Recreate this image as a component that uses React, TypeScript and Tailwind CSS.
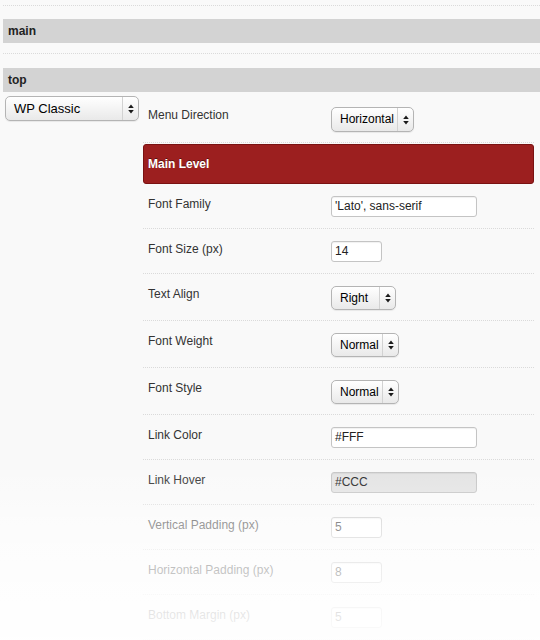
import React from "react";

type SelectProps = { value: string; className: string; big?: boolean };

function Arrows() {
  return (
    <svg width="6" height="10" viewBox="0 0 6 10">
      <path d="M3 0.5 L5.8 4 H0.2 Z M3 9.5 L5.8 6 H0.2 Z" fill="#1a1a1a" />
    </svg>
  );
}

function Select({ value, className, big }: SelectProps) {
  return (
    <div
      className={`flex items-stretch rounded-[5px] border border-[#b4b4b4] bg-[linear-gradient(#ffffff,#e9e9e9)] shadow-[0_1px_1px_rgba(0,0,0,0.07)] ${className}`}
    >
      <span
        className={`flex-1 pl-[8px] text-black ${big ? "text-[13px] leading-[23px]" : "text-[12px] leading-[22px]"}`}
      >
        {value}
      </span>
      <span className="flex w-[16px] items-center justify-center border-l border-[#d2d2d2]">
        <Arrows />
      </span>
    </div>
  );
}

function TextInput({ value, className, disabled }: { value: string; className: string; disabled?: boolean }) {
  return (
    <div
      className={`h-[21px] rounded-[3px] border border-[#c4c4c4] pl-[3px] text-[12px] leading-[19px] text-[#222] shadow-[inset_0_1px_1px_rgba(0,0,0,0.06)] ${
        disabled ? "bg-[#e3e3e3]" : "bg-white"
      } ${className}`}
    >
      {value}
    </div>
  );
}

function Row({ label, children, select }: { label: string; children: React.ReactNode; select?: boolean }) {
  return (
    <div
      className={`flex border-b border-dotted border-[#dadada] pt-[12px] ${select ? "pb-[10px]" : "pb-[11px]"}`}
    >
      <div className="w-[188px] pl-[5px] text-[12px] leading-[16px] text-[#333]">{label}</div>
      <div>{children}</div>
    </div>
  );
}

function SectionBar({ title }: { title: string }) {
  return (
    <div className="ml-[3px] h-[24px] bg-[#d3d3d3] pl-[5px] text-[12px] font-bold leading-[24px] text-[#222]">
      {title}
    </div>
  );
}

export default function App() {
  return (
    <div
      className="relative h-[640px] w-[540px] overflow-hidden bg-[#f9f9f9]"
      style={{ fontFamily: '"Liberation Sans", Arial, sans-serif' }}
    >
      <div className="pt-[5px]">
        <div className="ml-[3px] border-t border-dotted border-[#dadada]" />
        <div className="pt-[13px] pb-[10px]">
          <SectionBar title="main" />
        </div>
        <div className="ml-[3px] border-t border-dotted border-[#dadada]" />
        <div className="pt-[14px]">
          <SectionBar title="top" />
        </div>

        <div className="flex">
          <div className="w-[143px] pt-[4px] pl-[5px]">
            <Select value="WP Classic" className="h-[25px] w-[134px]" big />
          </div>

          <div className="w-[391px]">
            <div className="flex border-b border-dotted border-[#dadada] pt-[15px] pb-[10px]">
              <div className="w-[188px] pl-[5px] text-[12px] leading-[16px] text-[#333]">Menu Direction</div>
              <Select value="Horizontal" className="h-[25px] w-[83px]" />
            </div>

            <div className="mt-[1px] h-[40px] rounded-[3px] border border-[#7a1212] bg-[#9c1f1f] pl-[4px] text-[12px] font-bold leading-[38px] text-white [text-shadow:0_-1px_0_rgba(0,0,0,0.45)]">
              Main Level
            </div>

            <Row label="Font Family">
              <TextInput value="'Lato', sans-serif" className="w-[146px]" />
            </Row>
            <Row label="Font Size (px)">
              <TextInput value="14" className="w-[51px]" />
            </Row>
            <Row label="Text Align" select>
              <Select value="Right" className="h-[24px] w-[65px]" />
            </Row>
            <Row label="Font Weight" select>
              <Select value="Normal" className="h-[24px] w-[68px]" />
            </Row>
            <Row label="Font Style" select>
              <Select value="Normal" className="h-[24px] w-[68px]" />
            </Row>
            <Row label="Link Color">
              <TextInput value="#FFF" className="w-[146px]" />
            </Row>
            <Row label="Link Hover">
              <TextInput value="#CCC" className="w-[146px]" disabled />
            </Row>
            <Row label="Vertical Padding (px)">
              <TextInput value="5" className="w-[51px]" />
            </Row>
            <Row label="Horizontal Padding (px)">
              <TextInput value="8" className="w-[51px]" />
            </Row>
            <Row label="Bottom Margin (px)">
              <TextInput value="5" className="w-[51px]" />
            </Row>
          </div>
        </div>
      </div>

      {/* soft fade toward the bottom edge */}
      <div className="pointer-events-none absolute inset-0 bg-[linear-gradient(to_bottom,rgba(255,255,255,0)_460px,rgba(255,255,255,0.15)_490px,rgba(255,255,255,0.5)_525px,rgba(255,255,255,0.7)_570px,rgba(255,255,255,0.88)_615px,rgba(255,255,255,0.92)_640px)]" />
    </div>
  );
}
